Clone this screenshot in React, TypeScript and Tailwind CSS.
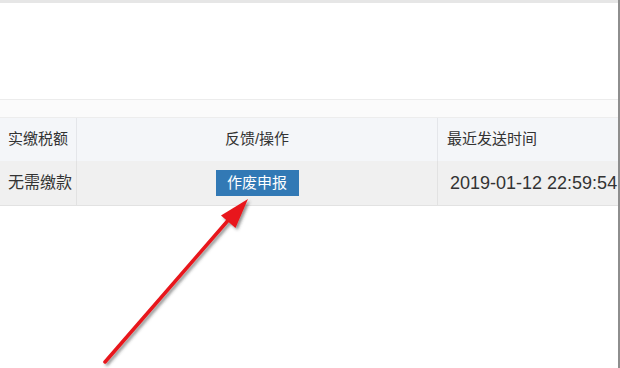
import React from 'react';

// 表格欄位
const headers = ['实缴税额', '反馈/操作', '最近发送时间'];

function Arrow() {
  // 紅色標註箭頭
  return (
    <svg
      className="pointer-events-none absolute left-0 top-0"
      width={620}
      height={368}
      viewBox="0 0 620 368"
    >
      <defs>
        <filter id="shadow" x="-20%" y="-20%" width="140%" height="140%">
          <feDropShadow dx="2" dy="2" stdDeviation="1.4" floodColor="#3a3a3a" floodOpacity="0.55" />
        </filter>
      </defs>
      <g filter="url(#shadow)">
        <line x1={105} y1={362} x2={231} y2={217} stroke="#e8161a" strokeWidth={3.5} strokeLinecap="round" />
        <polygon points="248,199 235.5,228 221,215.5" fill="#e8161a" />
      </g>
    </svg>
  );
}

export default function App() {
  return (
    <div
      className="relative h-[368px] w-[620px] overflow-hidden border-r-2 border-[#8e8e8e] bg-white text-[#333]"
      style={{ fontFamily: '"Liberation Sans", "Noto Sans CJK SC", sans-serif' }}
    >
      <div className="h-[3px] bg-[#e6e6e6]" />
      <div className="h-[97px] border-b border-[#ececec] bg-white" />
      <div className="h-[17px] bg-[#fbfbfb]" />

      {/* 表頭 */}
      <div className="grid h-[44px] grid-cols-[77px_361px_1fr] border-t border-[#ededed] bg-[#f4f6f9] text-[15px]">
        <div className="flex items-center border-r border-[#e4e6ea] pl-2">{headers[0]}</div>
        <div className="flex items-center justify-center border-r border-[#e4e6ea]">{headers[1]}</div>
        <div className="flex items-center pl-[9px]">{headers[2]}</div>
      </div>

      {/* 資料列 */}
      <div className="grid h-[45px] grid-cols-[77px_361px_1fr] border-b border-[#e2e2e2] bg-[#f0f0f0]">
        <div className="flex items-center border-r border-[#e2e2e2] pl-2 text-[16px]">无需缴款</div>
        <div className="flex items-center justify-center border-r border-[#e2e2e2]">
          <button className="h-[26px] w-[83px] bg-[#3279b5] text-[15px] text-white">作废申报</button>
        </div>
        <div className="flex items-center pl-3 text-[18px] whitespace-nowrap">2019-01-12 22:59:54</div>
      </div>

      <Arrow />
    </div>
  );
}
